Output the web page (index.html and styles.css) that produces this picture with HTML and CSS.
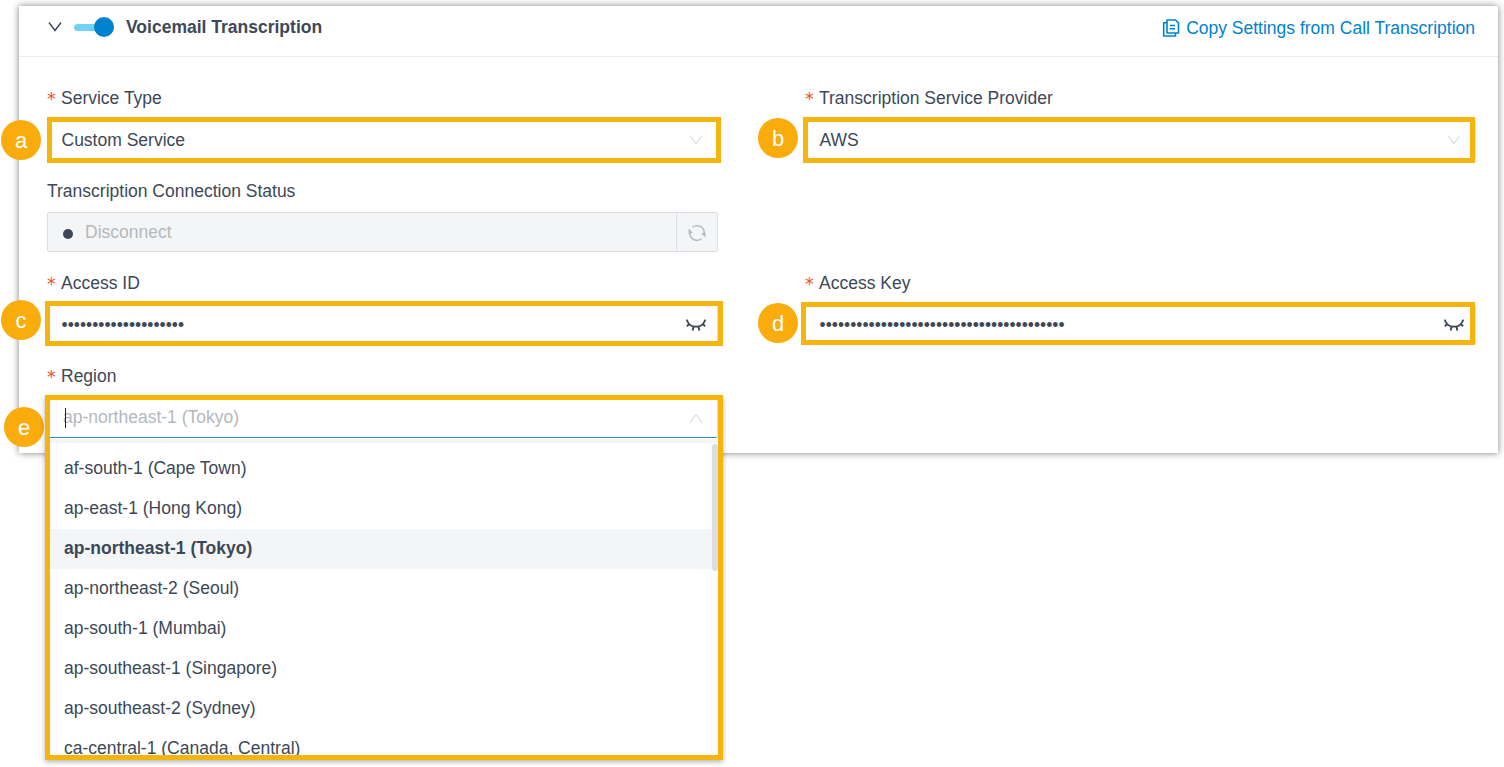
FILE: index.html
```html
<!DOCTYPE html>
<html lang="en">
<head>
  <meta charset="UTF-8" />
  <title>Voicemail Transcription</title>
  <link rel="stylesheet" href="styles.css">
</head>
<body>
  <section class="card">
    <header class="card-header">
      <svg class="chevron" width="14" height="10" viewBox="0 0 14 10"><path d="M1 .5l6 8 6-8" /></svg>
      <span class="switch"></span>
      <h1>Voicemail Transcription</h1>
      <a class="copy-link" href="#">
        <svg width="18" height="18" viewBox="0 0 18 18">
          <path d="M5 1h8.500l3 3v10H5z" />
          <path d="M5 3.800H1.700V17H13.500v-3M7.800 6.500h5.200M7.800 9.800h5.200" />
        </svg>
        Copy Settings from Call Transcription
      </a>
    </header>

    <div class="form">
      <div class="field">
        <label class="required">Service Type</label>
        <div class="control">
          <span class="value">Custom Service</span>
          <svg class="arrow" width="14" height="10" viewBox="0 0 14 10"><path d="M1 .5l6 8 6-8" /></svg>
          <i class="mark mark-a"></i>
          <b class="badge badge-a">a</b>
        </div>
      </div>

      <div class="field">
        <label class="required">Transcription Service Provider</label>
        <div class="control">
          <span class="value">AWS</span>
          <svg class="arrow" width="14" height="10" viewBox="0 0 14 10"><path d="M1 .5l6 8 6-8" /></svg>
          <i class="mark mark-b"></i>
          <b class="badge badge-b">b</b>
        </div>
      </div>

      <div class="field full">
        <label>Transcription Connection Status</label>
        <div class="control disabled">
          <i class="dot"></i>
          <span>Disconnect</span>
          <button class="refresh" title="Refresh">
            <svg width="18" height="18" viewBox="0 0 18 18">
              <path d="M1.700 9A7.300 7.300 0 0 0 13.500 14.700M16.300 9A7.300 7.300 0 0 0 4.500 3.300" />
              <path class="tip" d="M.8 4.500L4.800 8.800.4 9.500zM17.200 13.500L13.200 9.200l4.400-.7z" />
            </svg>
          </button>
        </div>
      </div>

      <div class="field">
        <label class="required">Access ID</label>
        <div class="control">
          <span class="secret">••••••••••••••••••••</span>
          <svg class="eye" width="20" height="12" viewBox="0 0 20 12"><path d="M.8.6c2.200 9.400 16.200 9.400 18.400 0M3.500 4.800L.9 7.200M7.500 7.500l-.8 4M12.500 7.500l.8 4M16.500 4.800l2.600 2.400" /></svg>
          <i class="mark mark-c"></i>
          <b class="badge badge-c">c</b>
        </div>
      </div>

      <div class="field">
        <label class="required">Access Key</label>
        <div class="control">
          <span class="secret">••••••••••••••••••••••••••••••••••••••••</span>
          <svg class="eye" width="20" height="12" viewBox="0 0 20 12"><path d="M.8.6c2.200 9.400 16.200 9.400 18.400 0M3.500 4.800L.9 7.200M7.500 7.500l-.8 4M12.500 7.500l.8 4M16.500 4.800l2.600 2.400" /></svg>
          <i class="mark mark-d"></i>
          <b class="badge badge-d">d</b>
        </div>
      </div>

      <div class="field">
        <label class="required">Region</label>
        <div class="control open">
          <span class="placeholder">ap-northeast-1 (Tokyo)</span>
          <svg class="arrow" width="14" height="10" viewBox="0 0 14 10"><path d="M1 9.500l6-8 6 8" /></svg>
          <i class="caret"></i>
          <ul class="options">
            <li>af-south-1 (Cape Town)</li>
            <li>ap-east-1 (Hong Kong)</li>
            <li class="selected">ap-northeast-1 (Tokyo)</li>
            <li>ap-northeast-2 (Seoul)</li>
            <li>ap-south-1 (Mumbai)</li>
            <li>ap-southeast-1 (Singapore)</li>
            <li>ap-southeast-2 (Sydney)</li>
            <li>ca-central-1 (Canada, Central)</li>
          </ul>
          <i class="scrollbar"></i>
          <i class="mark mark-e"></i>
          <b class="badge badge-e">e</b>
        </div>
      </div>
    </div>
  </section>
</body>
</html>
```

FILE: styles.css
```css
* {
  box-sizing: border-box;
}

body {
  margin: 0;
  padding: 6px 6px 0 19px;
  height: 767px;
  overflow: hidden;
  background: #fff;
  color: #3c4858;
  font-family: 'Liberation Sans', Arial, sans-serif;
  font-size: 17.5px;
}

svg {
  display: block;
  flex: none;
  fill: none;
  stroke: currentColor;
}

.card {
  height: 447px;
  background: #fff;
  box-shadow: 0 0 7px rgba(0, 0, 0, 0.5);
}

.card-header {
  display: flex;
  align-items: center;
  height: 51px;
  padding: 0 23px 8px 28.5px;
  border-bottom: 1px solid #ebecee;
}

.chevron {
  margin-right: 0.5px;
  stroke-width: 1.4;
}

.switch {
  position: relative;
  width: 40px;
  height: 7px;
  margin: 0 12px;
  border-radius: 4px;
  background: #73d1f5;
}

.switch::after {
  content: '';
  position: absolute;
  right: 0;
  top: -7px;
  width: 20px;
  height: 20px;
  border-radius: 50%;
  background: #0082ce;
}

h1 {
  margin: 0;
  font-size: 17.5px;
  font-weight: 700;
}

.copy-link {
  display: flex;
  align-items: center;
  gap: 6px;
  margin-left: auto;
  padding-top: 2px;
  color: #0082ce;
  text-decoration: none;
}

.copy-link svg {
  stroke-width: 1.6;
  stroke-linejoin: round;
}

.form {
  display: grid;
  grid-template-columns: 671px 671px;
  gap: 18.8px 87px;
  padding: 29.4px 22px 0 28px;
}

.full {
  grid-column: 1 / -1;
  width: 671px;
}

label {
  display: block;
  height: 24px;
  margin-bottom: 9.6px;
  line-height: 24px;
}

.required::before {
  content: '*';
  position: relative;
  top: 1px;
  display: inline-block;
  width: 14px;
  color: #f0502d;
  font-family: 'DejaVu Sans', sans-serif;
  line-height: 1;
}

.control {
  position: relative;
  display: flex;
  align-items: center;
  justify-content: space-between;
  height: 40px;
  padding: 0 14.5px 0 13.5px;
  border: 1px solid #dcdee3;
  border-radius: 2px;
}

.arrow {
  color: #d9dbdf;
  stroke-width: 1.2;
}

.value {
  padding-top: 1px;
}

.secret {
  padding-top: 2px;
}

.eye {
  margin-right: -3.5px;
  stroke-width: 1.9;
}

.disabled {
  justify-content: flex-start;
  padding: 0 0 0 15px;
  background: #f4f5f7;
  color: #b4b8be;
}

.dot {
  width: 10px;
  height: 10px;
  margin: 4px 12px 0 0;
  border-radius: 50%;
  background: #3c4858;
}

.refresh {
  display: flex;
  align-items: center;
  justify-content: center;
  width: 41px;
  height: 100%;
  margin-left: auto;
  padding: 2px 0 0;
  border: 0;
  border-left: 1px solid #dcdee3;
  background: none;
  color: #b4b8be;
}

.refresh svg {
  stroke-width: 1.4;
}

.tip {
  fill: currentColor;
  stroke: none;
}

.open {
  height: 41px;
  padding-left: 15px;
  border-bottom-color: #2a93cc;
}

.placeholder {
  color: #b4b8be;
}

.caret {
  position: absolute;
  left: 17px;
  top: 10px;
  width: 1px;
  height: 20px;
  background: #222;
}

/* region dropdown, hangs below the card */
.options {
  position: absolute;
  z-index: 1;
  top: 41px;
  left: 2px;
  width: 668px;
  height: 318px;
  margin: 0;
  padding: 6px 6px 0 0;
  overflow: hidden;
  list-style: none;
  background: #fff;
  border-top: 4px solid #f5f5f5;
}

.options li {
  height: 40px;
  padding-left: 14px;
  line-height: 38px;
}

.options .selected {
  background: #f4f5f7;
  font-weight: 700;
}

.scrollbar {
  position: absolute;
  z-index: 2;
  top: 46px;
  right: -1px;
  width: 6px;
  height: 127px;
  border-radius: 3px;
  background: #dddee3;
}

/* callout frames and letters */
.mark {
  position: absolute;
  z-index: 3;
  border: 5px solid #f5b50d;
}

.mark-a { inset: -4px -4px -4px -1px; }
.mark-b { inset: -4px 0 -4px -3px; }
.mark-c { inset: -4.500px -6px -2.500px -3px; }
.mark-d { inset: -3.500px 0 -1.500px -5px; }

.mark-e {
  inset: -3px -6px auto -3px;
  height: 365px;
  box-shadow: 0 2px 5px rgba(0, 0, 0, 0.3);
}

.badge {
  position: absolute;
  width: 40px;
  height: 40px;
  border-radius: 50%;
  background: #faac0c;
  color: #fff;
  font-size: 22px;
  font-weight: 400;
  line-height: 42px;
  text-align: center;
}

.badge-a { left: -47px; top: -1px; }
.badge-b { left: -48px; top: -3px; }
.badge-c { left: -47px; top: -5.8px; }
.badge-d { left: -48px; top: -2.8px; }
.badge-e { left: -44px; top: 9px; }
```
